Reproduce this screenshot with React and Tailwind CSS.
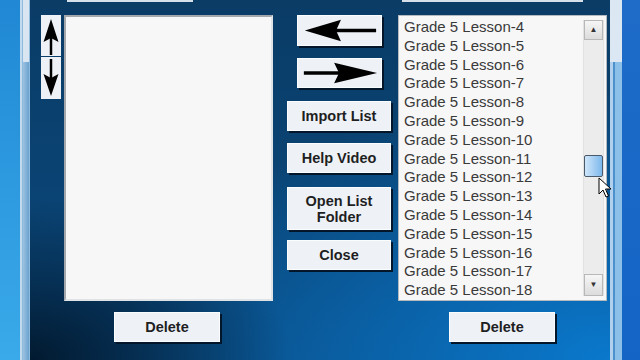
import React from "react";

const btn =
  "flex items-center justify-center bg-[#eef2f7] border border-[#fafcfe] shadow-[2px_2px_0_#03162a] text-[#1f1f1f] font-bold text-[14.5px] leading-[16px] text-center";

function LeftArrow() {
  return (
    <svg width="85" height="31" viewBox="0 0 85 31">
      <line x1="30" y1="15.5" x2="80" y2="15.5" stroke="#000" strokeWidth="3.5" />
      <polygon points="7,15.5 44,4.5 39,15.5 44,26.5" fill="#000" />
    </svg>
  );
}

function RightArrow() {
  return (
    <svg width="85" height="30" viewBox="0 0 85 30">
      <line x1="6" y1="15" x2="55" y2="15" stroke="#000" strokeWidth="3.5" />
      <polygon points="81,15 37,4.5 42,15 37,25.5" fill="#000" />
    </svg>
  );
}

function UpArrow() {
  return (
    <svg width="20" height="41" viewBox="0 0 20 41">
      <line x1="10" y1="20" x2="10" y2="40" stroke="#000" strokeWidth="2.5" />
      <polygon points="10,4 2.5,27 10,23 17.5,27" fill="#000" />
    </svg>
  );
}

function DownArrow() {
  return (
    <svg width="20" height="42" viewBox="0 0 20 42">
      <line x1="10" y1="2" x2="10" y2="24" stroke="#000" strokeWidth="2.5" />
      <polygon points="10,39 2.5,17 10,21 17.5,17" fill="#000" />
    </svg>
  );
}

const lessons = Array.from({ length: 15 }, (_, i) => `Grade 5 Lesson-${i + 4}`);

export default function App() {
  return (
    <div
      className="w-[640px] h-[360px] overflow-hidden flex relative"
      style={{ fontFamily: '"Liberation Sans", Arial, sans-serif' }}
    >
      {/* left desktop */}
      <div className="w-[20px] h-full bg-[linear-gradient(#2088d4,#3aaaea)]" />
      {/* left frame */}
      <div className="w-[10px] h-full flex flex-col border-l-2 border-[#c2daee] bg-[#8dbadd]">
        <div className="h-[62px] mx-[1px] bg-[#d9e6f2]" />
        <div className="flex-1 mx-[1px] bg-[linear-gradient(90deg,#9cc2e0,#6aa2cf)]" />
      </div>
      {/* main window */}
      <div className="w-[580px] h-full flex flex-col bg-[radial-gradient(ellipse_45%_45%_at_0%_100%,#021a30,transparent),radial-gradient(ellipse_85%_75%_at_100%_100%,#0a78cc,transparent),linear-gradient(#0a3c66,#0a4a80)]">
        <div className="h-[2px] flex">
          <div className="ml-[37px] w-[126px] h-[2px] bg-[#d6e0ea]" />
          <div className="ml-[209px] w-[181px] h-[2px] bg-[#d6e0ea]" />
        </div>
        <div className="mt-[13px] flex pl-[11px]">
          <div className="w-[20px] flex flex-col">
            <div className="h-[41px] bg-[#eef2f7] flex">
              <UpArrow />
            </div>
            <div className="mt-[1px] h-[42px] bg-[#eef2f7] flex">
              <DownArrow />
            </div>
          </div>
          <div className="ml-[3px] w-[209px] h-[286px] bg-[#f7f7f7] border-2 border-t-[#a4a8ac] border-l-[#a4a8ac] border-r-[#dfe3e6] border-b-[#dfe3e6]" />
          <div className="ml-[13px] w-[106px] flex flex-col items-center">
            <div className={`${btn} w-[85px] h-[31px]`}>
              <LeftArrow />
            </div>
            <div className={`${btn} mt-[12px] w-[85px] h-[30px]`}>
              <RightArrow />
            </div>
            <div className={`${btn} mt-[13px] w-[104px] h-[30px]`}>Import List</div>
            <div className={`${btn} mt-[12px] w-[104px] h-[30px]`}>Help Video</div>
            <div className={`${btn} mt-[14px] w-[104px] h-[43px]`}>
              Open List
              <br />
              Folder
            </div>
            <div className={`${btn} mt-[10px] w-[104px] h-[30px]`}>Close</div>
          </div>
          <div className="ml-[6px] w-[209px] h-[286px] bg-[#f7f7f7] border border-[#b4bac0] flex">
            <div className="flex-1 pl-[5px] pt-[2px] overflow-hidden">
              {lessons.map((l) => (
                <div key={l} className="h-[18.8px] leading-[18.8px] text-[15px] text-[#3a3a3a] whitespace-nowrap">
                  {l}
                </div>
              ))}
            </div>
            <div className="w-[21px] mr-[2px] my-[4px] flex flex-col bg-[#ececec] border-x border-[#e2e2e2]">
              <div className="h-[20px] border border-[#b8b8b8] bg-[linear-gradient(#f6f6f6,#dcdcdc)] flex items-center justify-center text-[8px] text-[#333]">
                ▲
              </div>
              <div className="flex-1 flex flex-col">
                <div className="mt-[115px] h-[22px] border border-[#4a5a6a] rounded-[2px] bg-[linear-gradient(90deg,#cfe6fa,#7cb8ec)]" />
              </div>
              <div className="h-[22px] border border-[#b8b8b8] bg-[linear-gradient(#f6f6f6,#dcdcdc)] flex items-center justify-center text-[8px] text-[#333]">
                ▼
              </div>
            </div>
          </div>
        </div>
        <div className="mt-[11px] flex">
          <div className={`${btn} ml-[84px] w-[106px] h-[30px]`}>Delete</div>
          <div className={`${btn} ml-[229px] w-[106px] h-[30px]`}>Delete</div>
        </div>
      </div>
      {/* right frame */}
      <div className="w-[12px] h-full flex flex-col">
        <div className="h-[62px] bg-[#dbe7f2]" />
        <div className="flex-1 flex">
          <div className="w-[3px] bg-[#b0d0ee]" />
          <div className="w-[2px] bg-[#4c90cc]" />
          <div className="flex-1 bg-[#8cc0e8]" />
        </div>
      </div>
      {/* right desktop */}
      <div className="flex-1 h-full bg-[linear-gradient(#1e6cc8,#1464c6)]" />
      {/* mouse cursor */}
      <svg className="absolute left-[598px] top-[177px]" width="14" height="22" viewBox="0 0 14 22">
        <path d="M1 1 L1 17 L5 13 L8 20 L10.5 19 L7.5 12 L13 12 Z" fill="#fff" stroke="#000" strokeWidth="1" strokeLinejoin="round" />
      </svg>
    </div>
  );
}
